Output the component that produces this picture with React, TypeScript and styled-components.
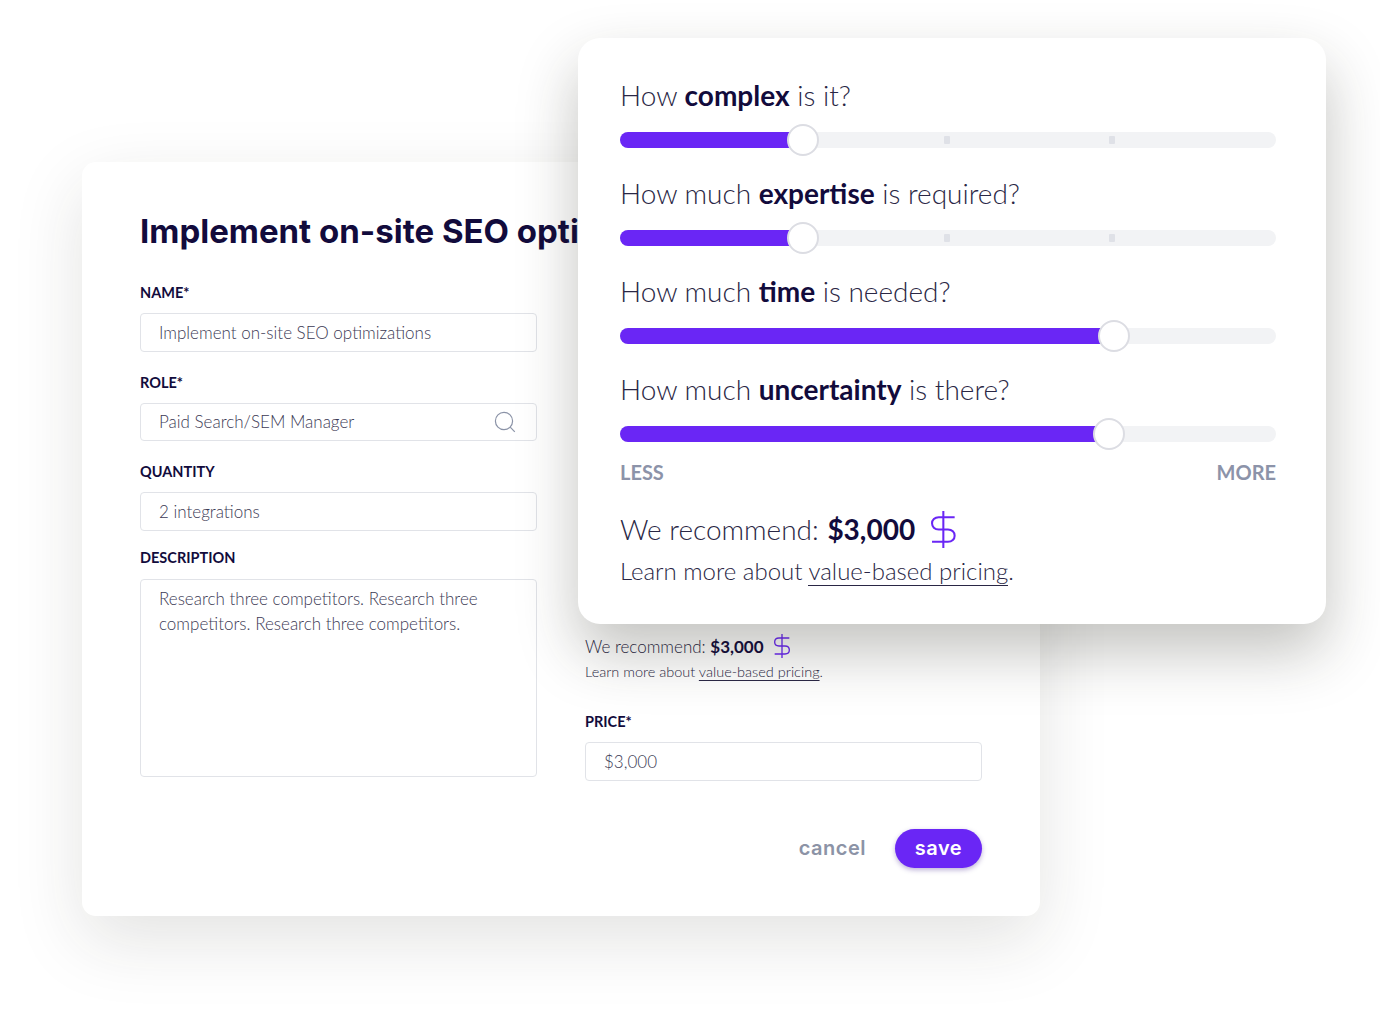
import React from 'react';
import styled, { createGlobalStyle } from 'styled-components';

const GlobalStyle = createGlobalStyle`
  html, body {
    margin: 0;
    padding: 0;
    background: #fff;
    font-family: "Lato", "Liberation Sans", sans-serif;
    color: #120b3c;
  }
`;

const QUESTIONS = [
  { before: 'How ', bold: 'complex', after: ' is it?', value: 27.9 },
  { before: 'How much ', bold: 'expertise', after: ' is required?', value: 27.9 },
  { before: 'How much ', bold: 'time', after: ' is needed?', value: 75.25 },
  { before: 'How much ', bold: 'uncertainty', after: ' is there?', value: 74.6 },
];

const TICKS = [49.9, 75];

const DollarIcon = ({ size }: { size: number }) => (
  <svg width={size * 0.667} height={size} viewBox="0 0 24 36" fill="none" stroke="#6a26f5" strokeWidth="2">
    <path d="M12 0v36" />
    <path d="M23 6H7.500C3.500 6 1 8.800 1 12c0 3.200 2.500 6 6.500 6h9c4 0 6.500 2.800 6.500 6s-2.500 6-6.500 6H1" />
  </svg>
);

const SearchIcon = () => (
  <svg width="22" height="22" viewBox="0 0 22 22" fill="none" stroke="#8b93a7" strokeWidth="1.2">
    <circle cx="10" cy="10" r="8.600" />
    <path d="M16.200 16.200l4.600 4.600" />
  </svg>
);

const App: React.FC = () => {
  return (
    <Page>
      <GlobalStyle />

      <BackCard>
        <Title>Implement on-site SEO optimizations</Title>

        <Columns>
          <Column>
            <FieldLabel>NAME*</FieldLabel>
            <Input>Implement on-site SEO optimizations</Input>

            <FieldLabel>ROLE*</FieldLabel>
            <Input>
              Paid Search/SEM Manager
              <SearchIcon />
            </Input>

            <FieldLabel>QUANTITY</FieldLabel>
            <Input>2 integrations</Input>

            <DescriptionLabel>DESCRIPTION</DescriptionLabel>
            <TextArea>
              Research three competitors. Research three competitors. Research three competitors.
            </TextArea>
          </Column>

          <RightColumn>
            <SmallRecommend>
              We recommend: <b>$3,000</b>
              <DollarIcon size={24} />
            </SmallRecommend>
            <SmallLearn>
              Learn more about <u>value-based pricing</u>.
            </SmallLearn>

            <PriceLabel>PRICE*</PriceLabel>
            <Input>$3,000</Input>

            <Actions>
              <CancelButton>cancel</CancelButton>
              <SaveButton>save</SaveButton>
            </Actions>
          </RightColumn>
        </Columns>
      </BackCard>

      <FrontCard>
        {QUESTIONS.map(q => (
          <Question key={q.bold}>
            <QuestionText>
              {q.before}
              <b>{q.bold}</b>
              {q.after}
            </QuestionText>
            <Track>
              {TICKS.map(t => (
                <Tick key={t} style={{ left: `${t}%` }} />
              ))}
              <Fill style={{ width: `${q.value}%` }} />
              <Thumb style={{ left: `${q.value}%` }} />
            </Track>
          </Question>
        ))}

        <Scale>
          <span>LESS</span>
          <span>MORE</span>
        </Scale>

        <Recommend>
          We recommend: <b>$3,000</b>
          <DollarIcon size={37} />
        </Recommend>
        <Learn>
          Learn more about <LearnLink>value-based pricing</LearnLink>.
        </Learn>
      </FrontCard>
    </Page>
  );
};

export default App;

const Page = styled.div`
  position: relative;
  width: 1380px;
  height: 1020px;
  padding: 162px 0 0 82px;
  box-sizing: border-box;
  overflow: hidden;
  background: #fff;
`;

const BackCard = styled.div`
  width: 958px;
  height: 754px;
  box-sizing: border-box;
  padding: 47px 58px 0;
  background: #fff;
  border-radius: 14px;
  box-shadow: 0 24px 70px rgba(40, 40, 30, 0.13);
  overflow: hidden;
`;

const Title = styled.h1`
  margin: 0 0 29px;
  font-family: "Inter", sans-serif;
  font-size: 33px;
  line-height: 44px;
  font-weight: 700;
  white-space: nowrap;
  color: #120b3c;
`;

const Columns = styled.div`
  display: flex;
  gap: 48px;
`;

const Column = styled.div`
  width: 397px;
`;

const RightColumn = styled(Column)`
  padding-top: 352px;
`;

const FieldLabel = styled.div`
  font-size: 14.5px;
  line-height: 22px;
  font-weight: 700;
  margin: 0 0 9px;
  color: #120b3c;
  height: 22px;
`;

const DescriptionLabel = styled(FieldLabel)`
  margin: -3.5px 0 10px;
`;

const PriceLabel = styled(FieldLabel)`
  margin-top: 29px;
`;

const Input = styled.div`
  display: flex;
  align-items: center;
  justify-content: space-between;
  height: 38.5px;
  box-sizing: border-box;
  padding: 0 20px 0 18px;
  margin-bottom: 20px;
  border: 1.5px solid #e1e3e8;
  border-radius: 4px;
  font-size: 17px;
  font-weight: 300;
  color: #3c3a55;
  background: #fff;
`;

const TextArea = styled.div`
  height: 198px;
  box-sizing: border-box;
  padding: 5.5px 40px 0 18px;
  border: 1.5px solid #e1e3e8;
  border-radius: 4px;
  font-size: 17px;
  line-height: 25px;
  font-weight: 300;
  color: #3c3a55;
`;

const SmallRecommend = styled.div`
  display: flex;
  align-items: center;
  height: 24px;
  font-size: 17px;
  font-weight: 300;
  white-space: pre;
  color: #2a2745;

  b {
    font-weight: 700;
    color: #120b3c;
    margin-right: 10px;
  }
`;

const SmallLearn = styled.div`
  margin-top: 4px;
  font-size: 14.5px;
  line-height: 20px;
  font-weight: 300;
  color: #2a2745;

  u {
    text-underline-offset: 3px;
    text-decoration-thickness: 1px;
  }
`;

const Actions = styled.div`
  display: flex;
  justify-content: flex-end;
  align-items: center;
  gap: 29px;
  margin-top: 48px;
`;

const CancelButton = styled.span`
  font-family: "Inter", sans-serif;
  font-size: 20px;
  font-weight: 600;
  letter-spacing: 0.5px;
  color: #8c93a6;
`;

const SaveButton = styled.span`
  display: flex;
  align-items: center;
  justify-content: center;
  width: 87px;
  height: 39px;
  border-radius: 20px;
  background: #6a26f5;
  font-family: "Inter", sans-serif;
  font-size: 20px;
  font-weight: 600;
  letter-spacing: 0.5px;
  color: #fff;
  box-shadow: 0 2px 5px rgba(60, 30, 140, 0.35);
`;

const FrontCard = styled.div`
  position: absolute;
  left: 578px;
  top: 38px;
  width: 748px;
  height: 586px;
  box-sizing: border-box;
  padding: 37px 50px 0 42px;
  background: #fff;
  border-radius: 22px;
  box-shadow: 0 28px 60px rgba(40, 40, 30, 0.28);
`;

const Question = styled.div`
  height: 98px;
`;

const QuestionText = styled.div`
  font-size: 28px;
  line-height: 40px;
  font-weight: 300;
  color: #2a2745;
  white-space: pre;

  b {
    font-weight: 700;
    color: #120b3c;
  }
`;

const Track = styled.div`
  position: relative;
  margin-top: 17px;
  height: 16px;
  border-radius: 8px;
  background: #f2f3f5;
`;

const Tick = styled.div`
  position: absolute;
  top: 4px;
  width: 6px;
  height: 8px;
  margin-left: -3px;
  border-radius: 1px;
  background: #dfe1e7;
`;

const Fill = styled.div`
  position: absolute;
  left: 0;
  top: 0;
  bottom: 0;
  border-radius: 8px 0 0 8px;
  background: #6a26f5;
`;

const Thumb = styled.div`
  position: absolute;
  top: -8px;
  width: 32px;
  height: 32px;
  margin-left: -16px;
  box-sizing: border-box;
  border: 2px solid #dcdde3;
  border-radius: 50%;
  background: #fff;
`;

const Scale = styled.div`
  display: flex;
  justify-content: space-between;
  margin-top: -9px;
  font-size: 20px;
  line-height: 28px;
  font-weight: 700;
  color: #8c93a9;
`;

const Recommend = styled.div`
  display: flex;
  align-items: center;
  height: 40px;
  margin-top: 23px;
  font-size: 28px;
  font-weight: 300;
  color: #2a2745;
  white-space: pre;

  b {
    font-weight: 700;
    color: #120b3c;
    margin: 0 16px 0 1px;
  }
`;

const Learn = styled.div`
  margin-top: 5px;
  font-size: 24px;
  line-height: 34px;
  font-weight: 300;
  color: #2a2745;
`;

const LearnLink = styled.span`
  border-bottom: 1px solid #2a2745;
`;
